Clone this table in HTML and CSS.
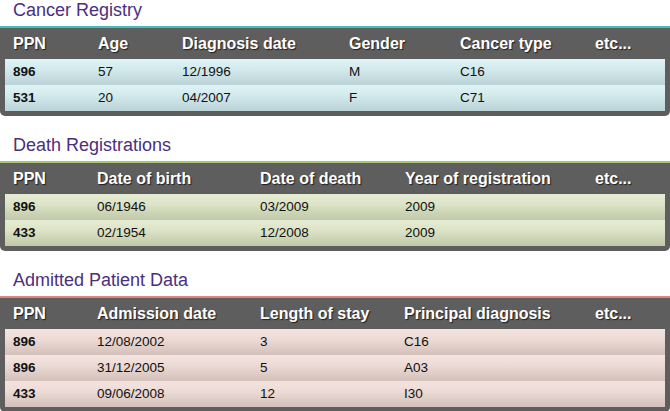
FILE: index.html
```html
<!DOCTYPE html>
<html>
<head>
<meta charset="utf-8">
<link rel="stylesheet" href="styles.css">
</head>
<body>
<section class="sec sec-cancer">
  <h2 class="title">Cancer Registry</h2>
  <div class="box">
    <div class="row head"><span>PPN</span><span>Age</span><span>Diagnosis date</span><span>Gender</span><span>Cancer type</span><span>etc...</span></div>
    <div class="row data"><span class="id">896</span><span>57</span><span>12/1996</span><span>M</span><span>C16</span><span></span></div>
    <div class="row data"><span class="id">531</span><span>20</span><span>04/2007</span><span>F</span><span>C71</span><span></span></div>
  </div>
</section>
<section class="sec sec-death">
  <h2 class="title">Death Registrations</h2>
  <div class="box">
    <div class="row head"><span>PPN</span><span>Date of birth</span><span>Date of death</span><span>Year of registration</span><span>etc...</span></div>
    <div class="row data"><span class="id">896</span><span>06/1946</span><span>03/2009</span><span>2009</span><span></span></div>
    <div class="row data"><span class="id">433</span><span>02/1954</span><span>12/2008</span><span>2009</span><span></span></div>
  </div>
</section>
<section class="sec sec-admit">
  <h2 class="title">Admitted Patient Data</h2>
  <div class="box">
    <div class="row head"><span>PPN</span><span>Admission date</span><span>Length of stay</span><span>Principal diagnosis</span><span>etc...</span></div>
    <div class="row data"><span class="id">896</span><span>12/08/2002</span><span>3</span><span>C16</span><span></span></div>
    <div class="row data"><span class="id">896</span><span>31/12/2005</span><span>5</span><span>A03</span><span></span></div>
    <div class="row data"><span class="id">433</span><span>09/06/2008</span><span>12</span><span>I30</span><span></span></div>
  </div>
</section>
</body>
</html>
```

FILE: styles.css
```css
html, body {
  margin: 0;
  padding: 0;
  background: #ffffff;
}
body {
  width: 670px;
  font-family: "Liberation Sans", Arial, sans-serif;
}
.sec {
  margin-top: 19px;
}
.sec-cancer {
  margin-top: 0;
}
.title {
  margin: 0;
  height: 26px;
  padding-left: 13px;
  font-size: 18px;
  line-height: 20px;
  font-weight: normal;
  color: #4b2f7f;
}
.box {
  background: #5e5e5e;
  border-top: 2px solid #3fc0bd;
  border-radius: 0 0 5px 5px;
  padding: 0 5px 5px 5px;
}
.sec-death .box {
  border-top-color: #a6c77a;
}
.sec-admit .box {
  border-top-color: #de8483;
}
.row {
  display: grid;
  padding-left: 8px;
}
.sec-cancer .row {
  grid-template-columns: 85px 84px 167px 111px 135px 1fr;
}
.sec-death .row {
  grid-template-columns: 84px 163px 145px 190px 1fr;
}
.sec-admit .row {
  grid-template-columns: 84px 163px 144px 191px 1fr;
}
.head {
  height: 31px;
  line-height: 31px;
  font-size: 16px;
  font-weight: bold;
  color: #ffffff;
  text-shadow: 1px 1px 1px #1f1f1f;
  white-space: nowrap;
}
.data {
  height: 26px;
  line-height: 26px;
  font-size: 13.5px;
  color: #111111;
}
.sec-cancer .data {
  background: linear-gradient(#def3f6, #d3eaed 40%, #bad3d6);
}
.sec-death .data {
  background: linear-gradient(#e6ecd4, #dce3c6 40%, #bfc8a8);
}
.sec-admit .data {
  background: linear-gradient(#f4e4e0, #ecdad5 40%, #d3c0ba);
}
.id {
  font-weight: bold;
}
```
